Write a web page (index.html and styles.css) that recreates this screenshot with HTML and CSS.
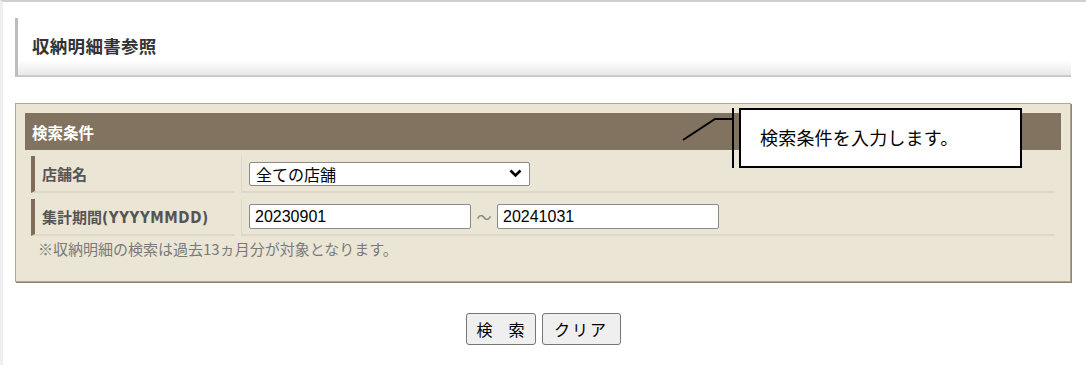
FILE: index.html
```html
<!DOCTYPE html>
<html lang="ja">
<head>
<meta charset="utf-8">
<title>収納明細書参照</title>
<link rel="stylesheet" href="styles.css">
</head>
<body>
<div class="page">
  <div class="title-box"><h1 class="title">収納明細書参照</h1></div>

  <div class="panel">
    <div class="panel-head">検索条件</div>
    <table class="cond">
      <tr>
        <th class="label">店舗名</th>
        <td class="value">
          <div class="select">
            <span>全ての店舗</span>
            <svg class="chev" width="13" height="9" viewBox="0 0 13 9"><path d="M1.5 1.5 L6.5 6.5 L11.5 1.5" fill="none" stroke="#000" stroke-width="2.6"/></svg>
          </div>
        </td>
      </tr>
      <tr>
        <th class="label">集計期間<span class="lat">(YYYYMMDD)</span></th>
        <td class="value">
          <div class="range">
            <input class="date" type="text" value="20230901">
            <span class="tilde">～</span>
            <input class="date" type="text" value="20241031">
          </div>
        </td>
      </tr>
    </table>
    <p class="note">※収納明細の検索は過去13ヵ月分が対象となります。</p>
  </div>

  <div class="buttons">
    <button class="btn btn-search">検　索</button>
    <button class="btn btn-clear">クリア</button>
  </div>

  <div class="callout">
    <svg class="leader" width="60" height="64" viewBox="0 0 60 64"><line x1="52" y1="2" x2="52" y2="62" stroke="#000" stroke-width="2"/><polyline points="52,13 34,13 2,34" fill="none" stroke="#000" stroke-width="2"/></svg>
    検索条件を入力します。
  </div>
</div>
</body>
</html>
```

FILE: styles.css
```css
html, body {
  margin: 0;
  padding: 0;
  background: #fff;
}
body {
  font-family: "Noto Sans CJK JP", "Liberation Sans", sans-serif;
  color: #333;
}
.page {
  position: relative;
  min-height: 400px;
  border-top: 2px solid #cfcfcf;
  border-left: 3px solid #efefef;
  padding: 16px 15px 0 12px;
}
.title-box {
  height: 57px;
  border-left: 3px solid #bdbdbd;
  border-bottom: 2px solid #c9c9c9;
  background: linear-gradient(to bottom, #fff 0, #fff 42px, #e9e9e9 57px);
  display: flex;
  align-items: center;
}
.title {
  margin: 0 0 0 14px;
  font-size: 17.5px;
  font-weight: bold;
  color: #333;
  letter-spacing: 0.3px;
  line-height: 1;
  padding-bottom: 2px;
}
.panel {
  margin-top: 26px;
  background: #ebe5d5;
  border: 1px solid #b2a892;
  box-shadow: 1px 1px 0 #8e8472;
  padding: 9px 9px 0 9px;
  height: 168px;
}
.panel-head {
  height: 37px;
  background: #827360;
  color: #fff;
  font-weight: bold;
  font-size: 15.5px;
  display: flex;
  align-items: center;
  padding-left: 7px;
}
.cond {
  width: 100%;
  border-collapse: separate;
  border-spacing: 6px;
}
.label {
  width: 204px;
  height: 37px;
  box-sizing: border-box;
  text-align: left;
  border-left: 4px solid #7f6d5a;
  border-bottom: 2px solid #e0d8c6;
  padding: 0 0 0 7px;
  font-family: "DejaVu Sans Condensed", "Noto Sans CJK JP", sans-serif;
  font-size: 15px;
  font-weight: bold;
  color: #555;
  white-space: nowrap;
}
.lat {
  letter-spacing: 0.6px;
}
.value {
  height: 37px;
  box-sizing: border-box;
  border-left: 1px solid #e0d8c6;
  border-bottom: 2px solid #e0d8c6;
  padding: 0 0 0 7px;
}
.select {
  width: 281px;
  height: 24px;
  box-sizing: border-box;
  background: #fff;
  border: 1px solid #8a8a8a;
  border-radius: 2px;
  display: flex;
  align-items: center;
  justify-content: space-between;
  padding: 0 7px 0 6px;
  font-size: 16px;
  color: #000;
}
.chev { display: block; }
.range {
  display: flex;
  align-items: center;
}
.date {
  width: 222px;
  height: 25px;
  box-sizing: border-box;
  border: 1px solid #8a8a8a;
  border-radius: 2px;
  padding: 0 5px;
  font-family: "Liberation Sans", "Noto Sans CJK JP", sans-serif;
  font-size: 16px;
  color: #000;
  margin: 0;
}
.tilde {
  width: 26px;
  text-align: center;
  color: #888;
  font-size: 15px;
}
.note {
  margin: 0;
  padding-left: 13px;
  font-size: 15px;
  color: #7a7a7a;
  line-height: 20px;
  margin-top: -3px;
}
.buttons {
  display: flex;
  justify-content: center;
  gap: 6px;
  margin-top: 31px;
}
.btn {
  height: 32px;
  box-sizing: border-box;
  background: #efefef;
  border: 1px solid #767676;
  border-radius: 3px;
  font-family: "Noto Sans CJK JP", sans-serif;
  font-size: 16px;
  color: #000;
  padding: 0;
}
.btn-search { width: 70px; }
.btn-clear { width: 79px; letter-spacing: 2px; }
.callout {
  position: absolute;
  left: 736px;
  top: 106px;
  width: 283px;
  height: 60px;
  box-sizing: border-box;
  border: 2px solid #000;
  background: #fff;
  display: flex;
  align-items: center;
  padding: 0 0 2px 19px;
  font-size: 18px;
  color: #000;
  letter-spacing: 0.2px;
}
.leader {
  position: absolute;
  left: -60px;
  top: -4px;
}
```
